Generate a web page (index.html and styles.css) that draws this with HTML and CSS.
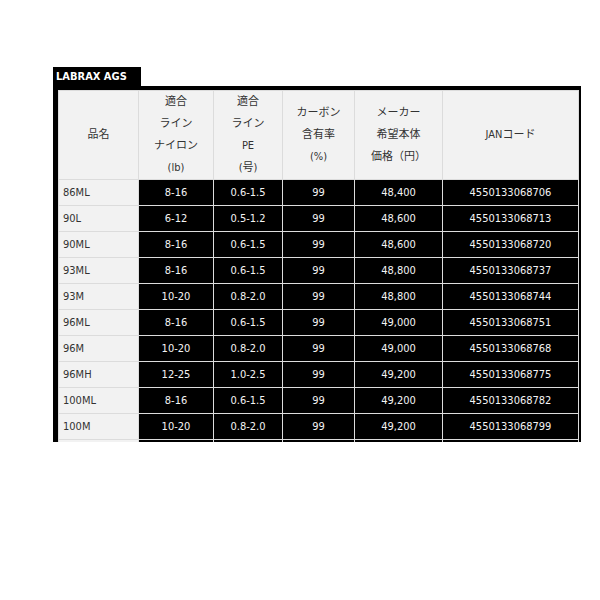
FILE: index.html
```html
<!DOCTYPE html>
<html lang="ja">
<head>
<meta charset="utf-8">
<title>LABRAX AGS</title>
<link rel="stylesheet" href="styles.css">
</head>
<body>
<div class="spec">
  <div class="spec-title">LABRAX AGS</div>
  <div class="spec-frame">
    <table class="spec-table">
      <colgroup>
        <col class="c-name"><col class="c-ny"><col class="c-pe"><col class="c-cb"><col class="c-price"><col class="c-jan">
      </colgroup>
      <thead>
        <tr>
          <th>品名</th>
          <th>適合<br>ライン<br>ナイロン<br>(lb)</th>
          <th>適合<br>ライン<br>PE<br>(号)</th>
          <th>カーボン<br>含有率<br>(%)</th>
          <th>メーカー<br>希望本体<br>価格（円）</th>
          <th>JANコード</th>
        </tr>
      </thead>
      <tbody>
        <tr><td class="name">86ML</td><td>8-16</td><td>0.6-1.5</td><td>99</td><td>48,400</td><td>4550133068706</td></tr>
        <tr><td class="name">90L</td><td>6-12</td><td>0.5-1.2</td><td>99</td><td>48,600</td><td>4550133068713</td></tr>
        <tr><td class="name">90ML</td><td>8-16</td><td>0.6-1.5</td><td>99</td><td>48,600</td><td>4550133068720</td></tr>
        <tr><td class="name">93ML</td><td>8-16</td><td>0.6-1.5</td><td>99</td><td>48,800</td><td>4550133068737</td></tr>
        <tr><td class="name">93M</td><td>10-20</td><td>0.8-2.0</td><td>99</td><td>48,800</td><td>4550133068744</td></tr>
        <tr><td class="name">96ML</td><td>8-16</td><td>0.6-1.5</td><td>99</td><td>49,000</td><td>4550133068751</td></tr>
        <tr><td class="name">96M</td><td>10-20</td><td>0.8-2.0</td><td>99</td><td>49,000</td><td>4550133068768</td></tr>
        <tr><td class="name">96MH</td><td>12-25</td><td>1.0-2.5</td><td>99</td><td>49,200</td><td>4550133068775</td></tr>
        <tr><td class="name">100ML</td><td>8-16</td><td>0.6-1.5</td><td>99</td><td>49,200</td><td>4550133068782</td></tr>
        <tr><td class="name">100M</td><td>10-20</td><td>0.8-2.0</td><td>99</td><td>49,200</td><td>4550133068799</td></tr>
        <tr><td class="name"></td><td></td><td></td><td></td><td></td><td></td></tr>
      </tbody>
    </table>
  </div>
</div>
</body>
</html>
```
FILE: styles.css
```css
html, body {
  margin: 0;
  padding: 0;
  background: #fff;
}
body {
  padding: 67px 0 0 53px;
  font-family: "DejaVu Sans Condensed", "DejaVu Sans", "Noto Sans CJK JP", sans-serif;
  font-stretch: semi-condensed;
  font-size: 11px;
  color: #333;
}
.spec {
  width: 528px;
}
.spec-title {
  display: inline-block;
  background: #000;
  color: #fff;
  font-weight: bold;
  font-size: 11px;
  height: 19px;
  line-height: 20px;
  padding: 0 12px 0 3px;
  width: 73px;
}
.spec-frame {
  background: #000;
  padding: 4px 3px 0 5px;
  height: 352px;
  overflow: hidden;
}
.spec-table {
  border-collapse: collapse;
  table-layout: fixed;
  width: 520px;
}
.c-name { width: 80px; }
.c-ny { width: 75px; }
.c-pe { width: 69px; }
.c-cb { width: 72px; }
.c-price { width: 88px; }
.c-jan { width: 136px; }
.spec-table th,
.spec-table td {
  border: 1px solid #dcdcdc;
  padding: 0;
  text-align: center;
  font-weight: normal;
}
.spec-table th {
  background: #f2f2f2;
  color: #333;
  height: 88px;
  line-height: 22px;
}
.spec-table td {
  background: #000;
  color: #f4f4f4;
  height: 25px;
  line-height: 14px;
}
.spec-table td.name {
  background: #f2f2f2;
  color: #333;
  text-align: left;
  padding-left: 4px;
}
```
